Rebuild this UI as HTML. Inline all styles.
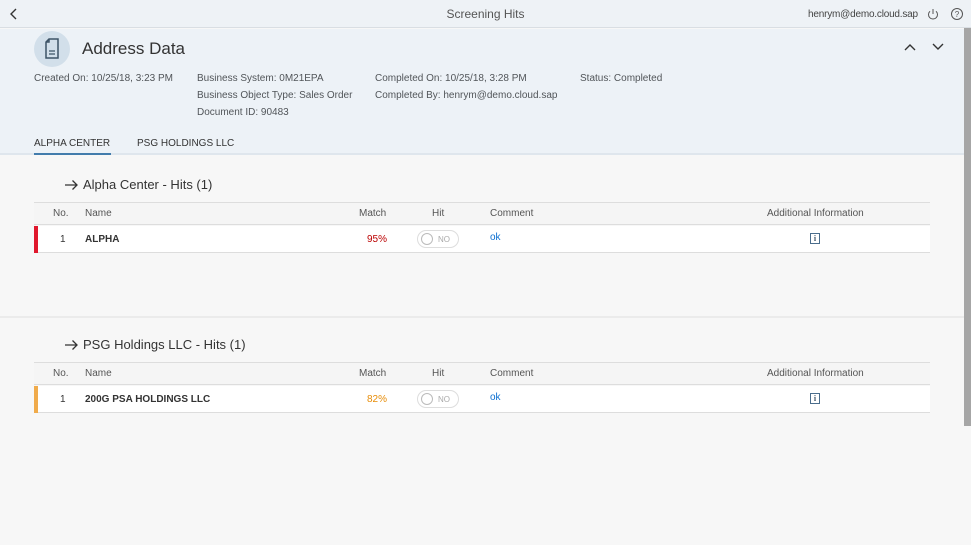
<!DOCTYPE html>
<html><head><meta charset="utf-8"><style>
*{margin:0;padding:0;box-sizing:border-box}
body{width:971px;height:545px;overflow:hidden;background:#f7f7f7;font-family:"Liberation Sans",Arial,sans-serif;color:#32363a;position:relative}
.a{position:absolute;white-space:nowrap}
.s{font-size:10px;color:#515559}
.t{font-size:10px;color:#555}
</style></head><body>
<div class="a" style="left:0;top:0;width:971px;height:28px;background:#eef2f6;border-bottom:1px solid #d9dee3"></div>
<svg class="a" style="left:9px;top:8px" width="10" height="12"><path d="M7 1 L2 6 L7 11" stroke="#333" stroke-width="1.4" fill="none"/></svg>
<div class="a" style="left:0;width:971px;top:7px;text-align:center;font-size:12px;color:#555">Screening Hits</div>
<div class="a" style="left:808px;top:9px;font-size:10px;color:#444;letter-spacing:-0.2px">henrym@demo.cloud.sap</div>
<svg class="a" style="left:926px;top:7px" width="14" height="14"><path d="M4 4.2 A4.5 4.5 0 1 0 10 4.2" stroke="#555" stroke-width="1" fill="none"/><path d="M7 2 V7" stroke="#555" stroke-width="1"/></svg>
<svg class="a" style="left:950px;top:7px" width="14" height="14"><circle cx="7" cy="7" r="5.5" stroke="#555" fill="none"/><text x="7" y="10" font-size="8" text-anchor="middle" fill="#555" font-family="Liberation Sans">?</text></svg>
<div class="a" style="left:0;top:29px;width:964px;height:126px;background:#edf2f7;border-bottom:2px solid #dfe6ed"></div>
<div class="a" style="left:964px;top:28px;width:7px;height:398px;background:#a6a6a6"></div>
<div class="a" style="left:34px;top:31px;width:36px;height:36px;border-radius:50%;background:#d2dfea"></div>
<svg class="a" style="left:43px;top:37px" width="20" height="24"><path d="M6 2 H15 V21 H3 V5 Z M3 5 H6 V2" stroke="#3d5366" stroke-width="1.5" fill="none"/><path d="M6 14 H12 M6 17 H12" stroke="#3d5366" stroke-width="1.3"/></svg>
<div class="a" style="left:82px;top:39px;font-size:17px;color:#333">Address Data</div>
<svg class="a" style="left:903px;top:42px" width="14" height="10"><path d="M2 8 L7 3 L12 8" stroke="#333" stroke-width="1.4" fill="none"/></svg>
<svg class="a" style="left:931px;top:42px" width="14" height="10"><path d="M2 2 L7 7 L12 2" stroke="#333" stroke-width="1.4" fill="none"/></svg>
<div class="a s" style="left:34px;top:73px">Created On: 10/25/18, 3:23 PM</div>
<div class="a s" style="left:197px;top:73px">Business System: 0M21EPA</div>
<div class="a s" style="left:197px;top:90px">Business Object Type: Sales Order</div>
<div class="a s" style="left:197px;top:107px">Document ID: 90483</div>
<div class="a s" style="left:375px;top:73px">Completed On: 10/25/18, 3:28 PM</div>
<div class="a s" style="left:375px;top:90px">Completed By: henrym@demo.cloud.sap</div>
<div class="a s" style="left:580px;top:73px">Status: Completed</div>
<div class="a" style="left:34px;top:138px;font-size:10px;color:#333">ALPHA CENTER</div>
<div class="a" style="left:34px;top:153px;width:77px;height:2px;background:#427cac"></div>
<div class="a" style="left:137px;top:138px;font-size:10px;color:#333">PSG HOLDINGS LLC</div>

<div class="a" style="left:0;top:316px;width:964px;height:2px;background:#ebebeb"></div>

<!-- table 1 -->
<svg class="a" style="left:64px;top:179px" width="16" height="12"><path d="M1 6 H13 M8.5 1.5 L13 6 L8.5 10.5" stroke="#333" stroke-width="1.3" fill="none"/></svg>
<div class="a" style="left:83px;top:177px;font-size:13px;color:#333">Alpha Center - Hits (1)</div>
<div class="a" style="left:34px;top:202px;width:896px;height:23px;background:#f5f5f5;border-top:1px solid #ddd;border-bottom:1px solid #ddd"></div>
<div class="a t" style="left:53px;top:208px">No.</div>
<div class="a t" style="left:85px;top:208px">Name</div>
<div class="a t" style="left:359px;top:208px">Match</div>
<div class="a t" style="left:432px;top:208px">Hit</div>
<div class="a t" style="left:490px;top:208px">Comment</div>
<div class="a t" style="left:767px;top:208px">Additional Information</div>
<div class="a" style="left:34px;top:226px;width:896px;height:27px;background:#fff;border-bottom:1px solid #ddd"></div>
<div class="a" style="left:34px;top:226px;width:4px;height:27px;background:#e0182d"></div>
<div class="a" style="left:60px;top:234px;font-size:10px;color:#333">1</div>
<div class="a" style="left:85px;top:234px;font-size:10px;font-weight:bold;color:#333">ALPHA</div>
<div class="a" style="left:367px;top:234px;font-size:10px;color:#bb0000">95%</div>
<div class="a" style="left:417px;top:230px;width:42px;height:18px;border:1px solid #ddd;border-radius:9px;background:#fff"></div>
<div class="a" style="left:421px;top:233px;width:12px;height:12px;border:1px solid #bbb;border-radius:50%"></div>
<div class="a" style="left:438px;top:235px;font-size:8px;color:#aaa">NO</div>
<div class="a" style="left:490px;top:232px;font-size:10px;color:#0a6ed1">ok</div>
<div class="a" style="left:810px;top:233px;width:10px;height:11px;border:1px solid #4a6d8c;font-size:8px;line-height:9px;text-align:center;color:#3d5366;font-family:'Liberation Serif',serif;font-weight:bold">i</div>

<!-- table 2 -->
<svg class="a" style="left:64px;top:339px" width="16" height="12"><path d="M1 6 H13 M8.5 1.5 L13 6 L8.5 10.5" stroke="#333" stroke-width="1.3" fill="none"/></svg>
<div class="a" style="left:83px;top:337px;font-size:13px;color:#333">PSG Holdings LLC - Hits (1)</div>
<div class="a" style="left:34px;top:362px;width:896px;height:23px;background:#f5f5f5;border-top:1px solid #ddd;border-bottom:1px solid #ddd"></div>
<div class="a t" style="left:53px;top:368px">No.</div>
<div class="a t" style="left:85px;top:368px">Name</div>
<div class="a t" style="left:359px;top:368px">Match</div>
<div class="a t" style="left:432px;top:368px">Hit</div>
<div class="a t" style="left:490px;top:368px">Comment</div>
<div class="a t" style="left:767px;top:368px">Additional Information</div>
<div class="a" style="left:34px;top:386px;width:896px;height:27px;background:#fff;border-bottom:1px solid #ddd"></div>
<div class="a" style="left:34px;top:386px;width:4px;height:27px;background:#f0ab4b"></div>
<div class="a" style="left:60px;top:394px;font-size:10px;color:#333">1</div>
<div class="a" style="left:85px;top:394px;font-size:10px;font-weight:bold;color:#333">200G PSA HOLDINGS LLC</div>
<div class="a" style="left:367px;top:394px;font-size:10px;color:#e78c07">82%</div>
<div class="a" style="left:417px;top:390px;width:42px;height:18px;border:1px solid #ddd;border-radius:9px;background:#fff"></div>
<div class="a" style="left:421px;top:393px;width:12px;height:12px;border:1px solid #bbb;border-radius:50%"></div>
<div class="a" style="left:438px;top:395px;font-size:8px;color:#aaa">NO</div>
<div class="a" style="left:490px;top:392px;font-size:10px;color:#0a6ed1">ok</div>
<div class="a" style="left:810px;top:393px;width:10px;height:11px;border:1px solid #4a6d8c;font-size:8px;line-height:9px;text-align:center;color:#3d5366;font-family:'Liberation Serif',serif;font-weight:bold">i</div>
</body></html>
